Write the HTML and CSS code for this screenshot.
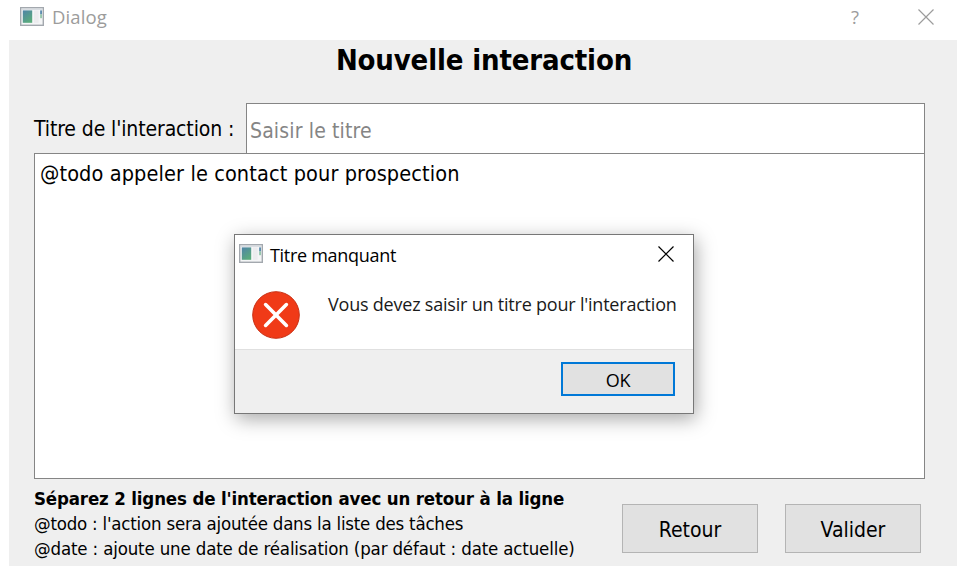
FILE: index.html
```html
<!DOCTYPE html>
<html lang="fr">
<head>
<meta charset="utf-8">
<title>Dialog</title>
<link rel="stylesheet" href="styles.css">
</head>
<body>
<svg class="defs" width="0" height="0" aria-hidden="true">
  <defs>
    <linearGradient id="screen" x1="0" y1="0" x2="0.6" y2="1">
      <stop offset="0" stop-color="#4f83a8"/>
      <stop offset="1" stop-color="#5aab7c"/>
    </linearGradient>
    <symbol id="app" viewBox="0 0 24 19">
      <rect x="0.7" y="0.7" width="22.6" height="17.6" fill="#f4f5f6" stroke="#a3a8ae" stroke-width="1.4"/>
      <rect x="1.4" y="1.4" width="21.2" height="1.4" fill="#d3d8dc"/>
      <rect x="2.8" y="3.4" width="9.4" height="12.4" fill="url(#screen)"/>
      <rect x="14" y="3.4" width="4.6" height="12.4" fill="#ececee"/>
      <rect x="20.2" y="3.4" width="1.7" height="4" fill="#4f83a8"/>
      <rect x="20.2" y="7.4" width="1.7" height="3.8" fill="#8cc3a3"/>
    </symbol>
    <symbol id="close" viewBox="0 0 16 16">
      <path d="M0.5 0.5L15.5 15.5M15.5 0.5L0.5 15.5" fill="none" stroke="currentColor" stroke-width="1.2"/>
    </symbol>
  </defs>
</svg>
<div class="window">
  <header class="titlebar">
    <svg class="app-icon"><use href="#app"/></svg>
    <span class="window-title">Dialog</span>
    <span class="help">?</span>
    <svg class="close"><use href="#close"/></svg>
  </header>
  <main class="content">
    <h1>Nouvelle interaction</h1>
    <div class="field">
      <label for="titre">Titre de l'interaction :</label>
      <input id="titre" type="text" placeholder="Saisir le titre">
    </div>
    <div class="editor">@todo appeler le contact pour prospection</div>
    <footer class="footer">
      <div class="hints">
        <p class="strong">Séparez 2 lignes de l'interaction avec un retour à la ligne</p>
        <p class="todo">@todo : l'action sera ajoutée dans la liste des tâches</p>
        <p>@date : ajoute une date de réalisation (par défaut : date actuelle)</p>
      </div>
      <div class="actions">
        <button type="button">Retour</button>
        <button type="button">Valider</button>
      </div>
    </footer>
  </main>
</div>
<section class="alert" role="alertdialog">
  <header class="alert-bar">
    <svg class="app-icon"><use href="#app"/></svg>
    <span class="alert-title">Titre manquant</span>
    <svg class="close"><use href="#close"/></svg>
  </header>
  <div class="alert-body">
    <svg class="error" viewBox="0 0 48 48">
      <circle cx="24" cy="24" r="23.3" fill="#f03a17" stroke="#c93014" stroke-width="1"/>
      <path d="M13.6 13.6L34.4 34.4M34.4 13.6L13.6 34.4" fill="none" stroke="#fff" stroke-width="3.6" stroke-linecap="round"/>
    </svg>
    <p>Vous devez saisir un titre pour l'interaction</p>
  </div>
  <div class="alert-actions">
    <button type="button" class="ok">OK</button>
  </div>
</section>
</body>
</html>
```
FILE: styles.css
```css
* {
  box-sizing: border-box;
}

body {
  margin: 0;
  height: 566px;
  overflow: hidden;
  background: #fff;
  color: #000;
  font-family: "DejaVu Sans Condensed", "DejaVu Sans", sans-serif;
  white-space: nowrap;
}

h1,
p {
  margin: 0;
}

.defs {
  display: block;
  height: 0;
}

.window {
  display: flex;
  flex-direction: column;
  height: 566px;
  padding: 0 4px 0 9px;
}

.titlebar {
  display: flex;
  flex: none;
  height: 40px;
  padding-left: 11px;
  color: #9c9c9c;
  font: 18.5px/24px "Open Sans", sans-serif;
}

.app-icon {
  flex: none;
  width: 24px;
  height: 19px;
}

.titlebar .app-icon {
  margin-top: 7px;
}

.window-title {
  flex: 1;
  margin: 5px 0 0 8px;
  letter-spacing: 0.1px;
}

.help {
  margin: 5px 0 0;
}

.close {
  flex: none;
  width: 16px;
  height: 16px;
}

.titlebar .close {
  margin: 9px 23px 0 59px;
}

.content {
  display: flex;
  flex: 1;
  flex-direction: column;
  padding: 0 32px 0 25px;
  background: #efefef;
}

h1 {
  height: 63px;
  padding-left: 9px;
  font-size: 29px;
  line-height: 40px;
  letter-spacing: -0.15px;
  text-align: center;
}

.field {
  display: flex;
  height: 50px;
}

label {
  width: 212px;
  font-size: 21px;
  line-height: 53px;
  letter-spacing: -0.12px;
}

input {
  flex: 1;
  min-width: 0;
  padding: 4px 3px 0;
  border: 1px solid #858585;
  border-bottom: 0;
  border-radius: 0;
  background: #fff;
  font: 21px "DejaVu Sans Condensed", "DejaVu Sans", sans-serif;
  letter-spacing: 0.15px;
  outline: 0;
}

input::placeholder {
  color: #858585;
}

.editor {
  height: 326px;
  padding: 7px 5px;
  border: 1px solid #858585;
  background: #fff;
  font-size: 21.5px;
  line-height: 26px;
  letter-spacing: 0.12px;
}

.footer {
  display: flex;
  justify-content: space-between;
  padding: 7px 4px 0 0;
}

.hints {
  font-size: 18.5px;
  line-height: 25px;
  letter-spacing: -0.15px;
}

.hints .strong {
  font-weight: bold;
}

.hints .todo {
  letter-spacing: -0.21px;
}

.actions {
  display: flex;
  gap: 27px;
  margin-top: 18px;
}

button {
  width: 136px;
  height: 49px;
  padding: 2px 0 0;
  border: 1px solid #b4b4b4;
  border-radius: 0;
  background: #e1e1e1;
  color: #000;
  font: 21px "DejaVu Sans Condensed", "DejaVu Sans", sans-serif;
}

.alert {
  position: absolute;
  left: 234px;
  top: 234px;
  width: 460px;
  height: 180px;
  display: flex;
  flex-direction: column;
  border: 1px solid #777;
  background: #fff;
  box-shadow: 2px 5px 18px rgba(0, 0, 0, 0.34);
  font: 18px/24px "Open Sans", sans-serif;
}

.alert-bar {
  display: flex;
  height: 50px;
  padding-left: 4px;
}

.alert-bar .app-icon {
  margin-top: 9px;
}

.alert-title {
  flex: 1;
  margin: 8px 0 0 7px;
  letter-spacing: -0.3px;
}

.alert-bar .close {
  margin: 11px 19px 0 0;
}

.alert-body {
  display: flex;
  height: 64px;
  padding-left: 17px;
}

.error {
  flex: none;
  width: 48px;
  height: 48px;
  margin-top: 6px;
}

.alert-body p {
  margin: 7px 0 0 28px;
  color: #1a1a1a;
  letter-spacing: -0.21px;
}

.alert-actions {
  display: flex;
  flex: 1;
  justify-content: flex-end;
  padding: 12px 18px 0 0;
  border-top: 1px solid #e0e0e0;
  background: #efefef;
}

.ok {
  width: 114px;
  height: 34px;
  border: 2px solid #0078d7;
  font: 18px "Open Sans", sans-serif;
  letter-spacing: -0.3px;
}
```
